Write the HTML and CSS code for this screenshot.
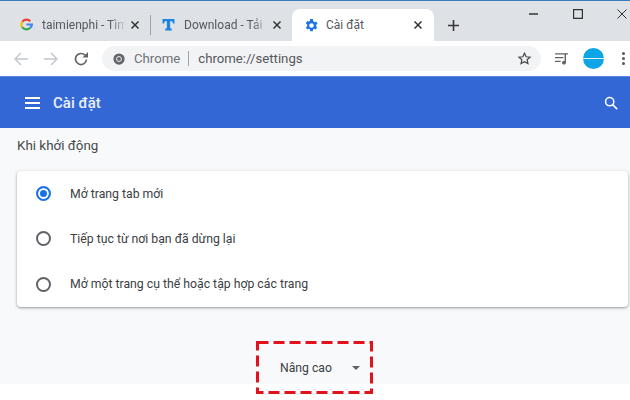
FILE: index.html
```html
<!DOCTYPE html>
<html lang="vi">

<head>
    <meta charset="UTF-8">
    <title>Cài đặt</title>
    <link rel="stylesheet" href="styles.css">
</head>

<body>
    <div class="tabstrip">
        <div class="tab">
            <svg class="favicon" viewBox="0 0 24 24">
                <path fill="none" stroke="#ea4335" stroke-width="4" d="M19 6A10 10 0 0 0 4 7"/>
                <path fill="none" stroke="#fbbc05" stroke-width="4" d="M4 7a10 10 0 0 0 0 10"/>
                <path fill="none" stroke="#34a853" stroke-width="4" d="M4 17a10 10 0 0 0 15 1"/>
                <path fill="none" stroke="#4285f4" stroke-width="4" d="M19 18a10 10 0 0 0 3-6H12"/>
            </svg>
            <span class="tab_title">taimienphi - Tìm</span>
            <svg class="tab_close" viewBox="0 0 8 8"><path stroke="#333" stroke-width="1.500" d="M.5.500l7 7M7.500.500l-7 7"/></svg>
        </div>
        <div class="tab_sep"></div>
        <div class="tab">
            <svg class="favicon" viewBox="0 0 24 24">
                <path fill="#1a84e0" d="M1 2h22v8h-3l-1-4h-4v13l3 1v3H6v-3l3-1V6H5l-1 4H1z"/>
            </svg>
            <span class="tab_title">Download - Tải</span>
            <svg class="tab_close" viewBox="0 0 8 8"><path stroke="#333" stroke-width="1.500" d="M.5.500l7 7M7.500.500l-7 7"/></svg>
        </div>
        <div class="tab active">
            <svg class="favicon" viewBox="3 2 18.600 20">
                <path fill="#1a73e8" d="M19.400 13c.1-.3.1-.7.1-1s0-.7-.1-1l2.100-1.600-2-3.500-2.500 1c-.5-.4-1.100-.7-1.700-1L14.300 2h-4l-.4 2.900c-.6.3-1.200.6-1.700 1l-2.500-1-2 3.500L5.800 11c-.1.300-.1.700-.1 1s0 .7.1 1l-2.100 1.600 2 3.500 2.500-1c.5.4 1.100.7 1.700 1l.4 2.900h4l.4-2.900c.6-.3 1.200-.6 1.700-1l2.500 1 2-3.500zM12.300 15.500a3.500 3.500 0 1 1 0-7 3.500 3.500 0 0 1 0 7z"/>
            </svg>
            <span class="tab_title">Cài đặt</span>
            <svg class="tab_close" viewBox="0 0 8 8"><path stroke="#333" stroke-width="1.500" d="M.5.500l7 7M7.500.500l-7 7"/></svg>
        </div>
        <svg class="new_tab" viewBox="0 0 11 11">
            <path fill="none" stroke="#35363a" stroke-width="1.600" d="M5.500 0v11M0 5.500h11"/>
        </svg>
        <div class="window_btns">
            <svg viewBox="0 0 10 10"><path stroke="#333" stroke-width="1.500" d="M0 5h9"/></svg>
            <svg viewBox="0 0 10 10"><path fill="none" stroke="#333" stroke-width="1.200" d="M.6.600h8.800v8.800H.6z"/></svg>
            <svg viewBox="0 0 10 10"><path stroke="#333" stroke-width="1" d="M.5.500l9 9M9.500.500l-9 9"/></svg>
        </div>
    </div>

    <div class="toolbar">
        <svg class="nav_icon" viewBox="0 0 14 14">
            <path fill="none" stroke="#c4c7cb" stroke-width="1.500" d="M14 7H1.500M7 1L1 7l6 6"/>
        </svg>
        <svg class="nav_icon" viewBox="0 0 14 14">
            <path fill="none" stroke="#c4c7cb" stroke-width="1.500" d="M0 7h12.500M7 1l6 6-6 6"/>
        </svg>
        <svg class="nav_icon" viewBox="0 0 14 14">
            <path fill="none" stroke="#5f6368" stroke-width="1.700" d="M12.500 7.500A5.500 5.500 0 1 1 11 3.200"/>
            <path fill="#5f6368" d="M8.500 5.500H14V0z"/>
        </svg>
        <div class="omnibox">
            <svg class="chrome_icon" viewBox="0 0 16 16">
                <circle cx="8" cy="8" r="7.500" fill="#63666a"/>
                <circle cx="8" cy="8" r="3.300" fill="#63666a" stroke="#f1f3f4" stroke-width="1.300"/>
            </svg>
            <span class="omni_chip">Chrome</span>
            <span class="omni_url">chrome://settings</span>
            <svg class="star" viewBox="0 0 24 24">
                <path fill="none" stroke="#46494d" stroke-width="2" d="M12 3.500l2.600 5.700 6.200.7-4.600 4.200 1.300 6.100-5.500-3.100-5.500 3.100 1.300-6.100-4.600-4.200 6.200-.7z"/>
            </svg>
        </div>
        <svg class="media_icon" viewBox="0 0 16 14">
            <path fill="none" stroke="#5f6368" stroke-width="1.300" d="M0 2h11M0 6h9M0 10h6"/>
            <path fill="none" stroke="#5f6368" stroke-width="1.500" d="M11 12V2h3"/>
            <circle cx="9.500" cy="11.500" r="2" fill="#5f6368"/>
        </svg>
        <div class="avatar"></div>
        <div class="menu_dots"><i></i><i></i><i></i></div>
    </div>

    <header class="app_bar">
        <div class="burger"><i></i><i></i><i></i></div>
        <h1>Cài đặt</h1>
        <svg class="search" viewBox="0 0 16 16">
            <circle cx="6.500" cy="6.500" r="4.700" fill="none" stroke="#fff" stroke-width="1.800"/>
            <path stroke="#fff" stroke-width="2" d="M10 10l5 5"/>
        </svg>
    </header>

    <main class="content">
        <h2>Khi khởi động</h2>
        <div class="card">
            <div class="radio_row">
                <span class="radio checked"></span>
                <span>Mở trang tab mới</span>
            </div>
            <div class="radio_row">
                <span class="radio"></span>
                <span>Tiếp tục từ nơi bạn đã dừng lại</span>
            </div>
            <div class="radio_row">
                <span class="radio"></span>
                <span>Mở một trang cụ thể hoặc tập hợp các trang</span>
            </div>
        </div>
        <div class="advanced">
            <span>Nâng cao</span>
            <span class="caret"></span>
        </div>
    </main>

    <svg class="highlight" viewBox="0 0 117 53">
        <rect x="1.500" y="1.500" width="114" height="50" fill="none" stroke="#e2121c" stroke-width="3" stroke-dasharray="11 5"/>
    </svg>
</body>

</html>
```

FILE: styles.css
```css
* {
    margin: 0;
    padding: 0;
    box-sizing: border-box;
}

html,
body {
    width: 630px;
    height: 400px;
    overflow: hidden;
    background: white;
}

body {
    position: relative;
    font-family: "Roboto", "Liberation Sans", sans-serif;
    color: rgb(60, 64, 67);
}

/* tab strip */
.tabstrip {
    height: 41px;
    display: flex;
    align-items: flex-end;
    background: rgb(222, 225, 230);
    border-top: 1px solid rgb(60, 120, 190);
    padding-left: 20px;
}

.tab {
    width: 130px;
    height: 32px;
    display: flex;
    align-items: center;
    font-size: 12px;
    color: rgb(85, 88, 92);
    padding-bottom: 1px;
}

.favicon {
    width: 13px;
    height: 13px;
    margin-right: 9px;
    flex-shrink: 0;
}

.tab_title {
    width: 85px;
    white-space: nowrap;
    -webkit-mask-image: linear-gradient(to right, black 80%, transparent);
    mask-image: linear-gradient(to right, black 80%, transparent);
}

.tab_close {
    width: 8px;
    height: 8px;
    margin-left: 4px;
}

.tab_sep {
    width: 1px;
    height: 20px;
    margin: 0 11px 6px 0;
    background: rgb(160, 163, 168);
}

.tab.active {
    width: 142px;
    height: 35px;
    margin-bottom: -3px;
    padding: 0 0 3px 13px;
    background: white;
    border-radius: 8px 8px 0 0;
}

.tab.active .favicon {
    margin-right: 8px;
}

.tab.active .tab_title {
    width: 84px;
    -webkit-mask-image: none;
    mask-image: none;
}

.new_tab {
    width: 11px;
    height: 11px;
    margin: 0 0 10px 14px;
}

.window_btns {
    position: absolute;
    top: 9px;
    right: 3px;
    display: flex;
    gap: 34px;
}

.window_btns svg {
    width: 10px;
    height: 10px;
}

/* toolbar */
.toolbar {
    height: 35px;
    display: flex;
    align-items: center;
    background: white;
    padding-left: 14px;
}

.nav_icon {
    width: 14px;
    height: 14px;
    margin-right: 16px;
}

.omnibox {
    width: 439px;
    height: 25px;
    margin-left: -2px;
    display: flex;
    align-items: center;
    background: rgb(241, 243, 244);
    border-radius: 13px;
    padding-left: 11px;
    font-size: 13.2px;
}

.chrome_icon {
    width: 12px;
    height: 12px;
    margin-right: 9px;
}

.omni_chip {
    color: rgb(110, 113, 118);
    padding-right: 8px;
    border-right: 1px solid rgb(160, 163, 168);
    margin-right: 9px;
}

.omni_url {
    color: rgb(85, 88, 92);
}

.star {
    width: 15px;
    height: 15px;
    margin-left: auto;
    margin-right: 9px;
}

.media_icon {
    width: 15px;
    height: 13px;
    margin-left: 14px;
}

.avatar {
    width: 21px;
    height: 21px;
    margin-left: 13px;
    border-radius: 50%;
    background: linear-gradient(rgb(12, 165, 230) 47%, rgb(220, 240, 250) 47%, rgb(220, 240, 250) 53%, rgb(12, 165, 230) 53%);
}

.menu_dots {
    display: flex;
    flex-flow: column;
    gap: 2px;
    margin-left: 18px;
}

.menu_dots i {
    width: 3px;
    height: 3px;
    border-radius: 50%;
    background: rgb(85, 88, 92);
}

/* blue header */
.app_bar {
    height: 52px;
    display: flex;
    align-items: center;
    background: rgb(51, 103, 214);
    border-top: 1px solid rgb(90, 135, 225);
    padding: 0 12px 0 25px;
    color: white;
}

.burger {
    display: flex;
    flex-flow: column;
    gap: 3px;
    margin-right: 13px;
}

.burger i {
    width: 15px;
    height: 2px;
    background: white;
}

.app_bar h1 {
    font-size: 15px;
    font-weight: 500;
    color: rgb(235, 240, 252);
}

.search {
    width: 14px;
    height: 14px;
    margin-left: auto;
}

/* content */
.content {
    height: 256px;
    background: rgb(248, 249, 250);
    padding: 0 2px 0 17px;
}

.content h2 {
    font-size: 13.4px;
    font-weight: 400;
    line-height: 16px;
    padding-top: 10px;
    height: 43px;
    color: rgb(70, 74, 78);
}

.card {
    display: flex;
    flex-flow: column;
    height: 136px;
    padding: 0 0 0 19px;
    background: white;
    border-radius: 4px;
    box-shadow: 0 1px 2px rgba(60, 64, 67, .35), 0 1px 3px 1px rgba(60, 64, 67, .15);
}

.radio_row {
    flex: 1;
    display: flex;
    align-items: center;
    font-size: 12.25px;
    color: rgb(60, 64, 67);
}

.radio {
    width: 15px;
    height: 15px;
    margin-right: 19px;
    border: 2px solid rgb(95, 99, 104);
    border-radius: 50%;
}

.radio.checked {
    border-color: rgb(26, 115, 232);
    background: rgb(26, 115, 232);
    box-shadow: inset 0 0 0 2px white;
}

.advanced {
    display: flex;
    align-items: center;
    margin: 53px 0 0 263px;
    font-size: 12.2px;
    height: 16px;
    color: rgb(60, 64, 67);
}

.caret {
    margin-left: 20px;
    border: 4px solid transparent;
    border-top: 4px solid rgb(95, 99, 104);
    border-bottom: 0;
}

/* red annotation box */
.highlight {
    position: absolute;
    left: 256px;
    top: 341px;
    width: 117px;
    height: 53px;
}
```
